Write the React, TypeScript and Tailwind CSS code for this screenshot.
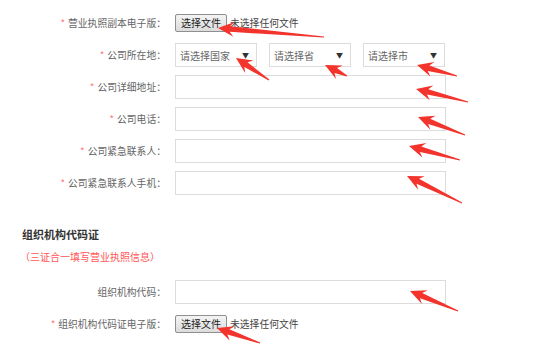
import React from "react";

type Pt = [number, number];

const arrows: [Pt, Pt][] = [
  [[218, 28], [324, 37]],
  [[236, 58], [269, 80]],
  [[325, 65], [347, 76]],
  [[417, 65], [457, 76]],
  [[416, 89], [468, 102]],
  [[418, 117], [465, 135]],
  [[409, 146], [460, 160]],
  [[407, 176], [462, 203]],
  [[410, 291], [458, 311]],
  [[217, 328], [260, 343]],
];

function arrowPoints(tip: Pt, tail: Pt) {
  const dx = tail[0] - tip[0];
  const dy = tail[1] - tip[1];
  const len = Math.hypot(dx, dy);
  const ux = dx / len;
  const uy = dy / len;
  const nx = -uy;
  const ny = ux;
  const H = 16;
  const W = 7.5;
  const at = (d: number, s: number): string =>
    `${(tip[0] + ux * d + nx * s).toFixed(1)},${(tip[1] + uy * d + ny * s).toFixed(1)}`;
  return [
    at(0, 0),
    at(H, W),
    at(H - 4, 2.8),
    at(len, 0.5),
    at(len, -0.5),
    at(H - 4, -2.8),
    at(H, -W),
  ].join(" ");
}

function Label({ text, required = true }: { text: string; required?: boolean }) {
  return (
    <div className="w-[166px] shrink-0 text-right text-[9.8px] leading-[14px] text-[#666]">
      {required && <span className="mr-[3px] text-[#f77]">*</span>}
      {text}：
    </div>
  );
}

function FileRow({ label }: { label: string }) {
  return (
    <div className="flex h-[24px] items-center">
      <Label text={label} />
      <div className="ml-[9px] flex items-center">
        <button className="h-[18px] w-[52px] rounded-[2px] border border-[#8f8f8f] bg-gradient-to-b from-[#f4f4f4] to-[#dcdcdc] text-[10px] leading-[16px] text-[#222]">
          选择文件
        </button>
        <span className="ml-[3px] text-[9.8px] text-[#444]">未选择任何文件</span>
      </div>
    </div>
  );
}

function InputRow({ label, required = true }: { label: string; required?: boolean }) {
  return (
    <div className="flex h-[24px] items-center">
      <Label text={label} required={required} />
      <div className="ml-[9px] h-[24px] w-[271px] border border-[#dcdcdc] bg-white" />
    </div>
  );
}

function Select({ text }: { text: string }) {
  return (
    <div className="flex h-[24px] w-[82px] items-center justify-between border border-[#dcdcdc] bg-white pl-[4px] pr-[7px] text-[10px] text-[#666]">
      <span>{text}</span>
      <span className="text-[7px] text-[#333]">▼</span>
    </div>
  );
}

export default function App() {
  return (
    <div
      className="relative h-[358px] w-[558px] overflow-hidden bg-white"
      style={{ fontFamily: '"Noto Sans CJK SC", "Noto Sans", sans-serif' }}
    >
      <div className="flex flex-col gap-[8px] pt-[11px]">
        <FileRow label="营业执照副本电子版" />
        <div className="flex h-[24px] items-center">
          <Label text="公司所在地" />
          <div className="ml-[9px] flex gap-[12px]">
            <Select text="请选择国家" />
            <Select text="请选择省" />
            <Select text="请选择市" />
          </div>
        </div>
        <InputRow label="公司详细地址" />
        <InputRow label="公司电话" />
        <InputRow label="公司紧急联系人" />
        <InputRow label="公司紧急联系人手机" />
      </div>

      <div className="mt-[31px] h-[16px] pl-[22px] text-[11px] font-bold leading-[16px] text-[#333]">
        组织机构代码证
      </div>
      <div className="mt-[7px] h-[16px] pl-[20px] text-[10px] leading-[16px] text-[#f55]">
        （三证合一填写营业执照信息）
      </div>

      <div className="mt-[15px] flex flex-col gap-[8px]">
        <InputRow label="组织机构代码" required={false} />
        <FileRow label="组织机构代码证电子版" />
      </div>

      <svg className="pointer-events-none absolute inset-0" width="558" height="358">
        {arrows.map(([tip, tail], i) => (
          <polygon key={i} points={arrowPoints(tip, tail)} fill="#f2342d" />
        ))}
      </svg>
    </div>
  );
}
